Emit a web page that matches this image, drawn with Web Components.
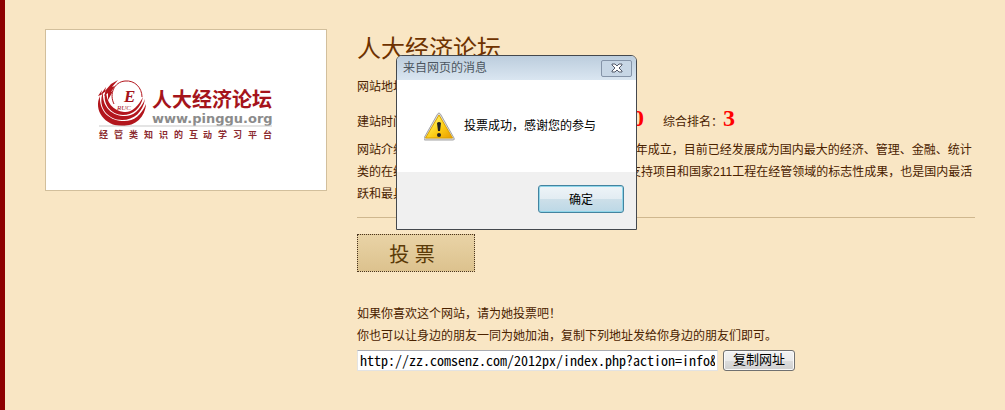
<!DOCTYPE html>
<html lang="zh-CN">
<head>
<meta charset="utf-8">
<title>人大经济论坛</title>
<style>
  body {
    margin: 0;
    background: #f9e6c4;
    color: #4a2200;
    font: 12px/22px "Liberation Sans", "Noto Sans CJK SC", sans-serif;
  }
</style>
</head>
<body>
<vote-page>
  <site-logo slot="logo"></site-logo>
  <site-info slot="main"></site-info>
  <vote-button slot="main">投 票</vote-button>
  <share-box slot="main" url="http://zz.comsenz.com/2012px/index.php?action=info&amp;"></share-box>
</vote-page>
<message-dialog heading="来自网页的消息">投票成功，感谢您的参与</message-dialog>

<script>
class VotePage extends HTMLElement {
  constructor() {
    super();
    this.attachShadow({ mode: 'open' });
    this.shadowRoot.innerHTML = `
      <style>
        :host {
          display: flex; align-items: flex-start; gap: 30px; box-sizing: border-box;
          min-height: 100vh; padding: 29px 30px 29px 40px; border-left: 5px solid #8e0000;
        }
        main { flex: 1; min-width: 0; }
      </style>
      <slot name="logo"></slot>
      <main><slot name="main"></slot></main>
    `;
  }
}
customElements.define('vote-page', VotePage);

class SiteLogo extends HTMLElement {
  constructor() {
    super();
    this.attachShadow({ mode: 'open' });
    this.shadowRoot.innerHTML = `
      <style>
        :host { display: block; background: #fff; border: 1px solid #d2bf9c; }
        svg { display: block; width: 280px; height: 160px; }
        .cn { font-family: "Noto Sans CJK SC", sans-serif; font-weight: 700; fill: #a5141b; }
        .name { font-size: 20px; }
        .tag { font-size: 9px; fill: #8c2b30; }
        .url { font: 700 13px "DejaVu Sans", sans-serif; fill: #8b8b8b; }
        .e { font: italic 700 17px "Liberation Serif", serif; fill: #a5141b; }
        .ruc { font: italic 7px "Liberation Serif", serif; fill: #a5141b; }
      </style>
      <svg viewBox="0 0 280 160" role="img" aria-label="人大经济论坛">
        <g fill="#b3161d">
          <path d="M54 66C47 80 59 96 76 96C90 96 99 87 100 74C95 86 87 92 76 91C62 90 53 80 54 66Z"/>
          <path d="M57 62C51 77 62 90 76 90C88 90 97 82 99 69C94 81 86 87 77 86C64 85 56 75 57 62Z"/>
          <path d="M60 60C55 73 65 85 77 85C87 85 95 78 97 67C92 77 85 83 78 82C67 81 60 72 60 60Z"/>
          <path d="M52 66L56 60L55 64L60 57L59 61L65 54L72 50L66 57L69 56L65 62L67 61L62 70L62 63L58 66L60 61L55 65Z"/>
        </g>
        <path d="M68 74C63 64 68 52 79 51C89 50 96 58 96 67" fill="none" stroke="#b3161d"/>
        <text class="e" x="78" y="72">E</text>
        <text class="ruc" x="71" y="80">RUC</text>
        <text class="cn name" x="106" y="77">人大经济论坛</text>
        <text class="url" x="106" y="93">www.pinggu.org</text>
        <path d="M53 96H226" stroke="#c9c9c9"/>
        <text class="cn tag" x="53 68 83 98 113 128 143 157 172 187 202 217" y="108">经管类知识的互动学习平台</text>
      </svg>
    `;
  }
}
customElements.define('site-logo', SiteLogo);

class SiteInfo extends HTMLElement {
  constructor() {
    super();
    this.attachShadow({ mode: 'open' });
    this.shadowRoot.innerHTML = `
      <style>
        :host { display: block; padding-bottom: 12px; border-bottom: 1px solid #cfb78e; }
        h1 { margin: 0; font-size: 24px; line-height: 40px; font-weight: 400; color: #6e3200; }
        p { margin: 0; }
        .address { padding-top: 7px; }
        .facts { display: flex; align-items: baseline; gap: 19px; padding: 8px 0 5px; line-height: 24px; }
        .period { display: flex; align-items: baseline; justify-content: space-between; width: 287px; }
        b { font: 700 24px/24px "Liberation Serif", serif; color: #f00; }
      </style>
      <h1>人大经济论坛</h1>
      <p class="address">网站地址：www.pinggu.org</p>
      <div class="facts">
        <div class="period"><span>建站时间：2003年</span><span>当前得票：<b>10</b></span></div>
        <span>综合排名：<b>3</b></span>
      </div>
      <p>网站介绍：人大经济论坛依托人大经济学院，于2003年成立，目前已经发展成为国内最大的经济、管理、金融、统计类的在线教育和培训平台网站，是国家985工程重点支持项目和国家211工程在经管领域的标志性成果，也是国内最活跃和最具影响力的经管教育网站。</p>
    `;
  }
}
customElements.define('site-info', SiteInfo);

class VoteButton extends HTMLElement {
  constructor() {
    super();
    this.attachShadow({ mode: 'open' });
    this.shadowRoot.innerHTML = `
      <style>
        :host { display: block; padding: 16px 0 31px; }
        button {
          display: block; width: 118px; height: 38px; padding: 0 8px 0 0;
          border: 1px dotted #4a3420; background: linear-gradient(#e9d3a6, #dcc28e);
          color: #5a3a08; font: 20px "Liberation Sans", "Noto Sans CJK SC", sans-serif; cursor: pointer;
        }
      </style>
      <button type="button"><slot></slot></button>
    `;
  }
}
customElements.define('vote-button', VoteButton);

class ShareBox extends HTMLElement {
  constructor() {
    super();
    this.attachShadow({ mode: 'open' });
    this.shadowRoot.innerHTML = `
      <style>
        :host { display: block; }
        p, label { display: block; margin: 0; }
        .row { display: flex; align-items: center; gap: 5px; padding-top: 3px; }
        input {
          box-sizing: border-box; width: 361px; height: 21px; padding: 0 2px 2px;
          border: 1px solid #e3e3e3; border-top-color: #abadb3; background: #fff; color: #000;
          font: 14px "Noto Sans Mono CJK SC", "Liberation Mono", monospace;
        }
        button {
          width: 72px; height: 21px; padding: 0 0 2px; border: 1px solid #707070; border-radius: 3px;
          background: linear-gradient(#f3f3f3, #ebebeb 50%, #dddddd 50%, #cfcfcf);
          box-shadow: inset 0 0 0 1px #fafafa; color: #000;
          font: 13px/17px "Liberation Sans", "Noto Sans CJK SC", sans-serif;
        }
      </style>
      <p>如果你喜欢这个网站，请为她投票吧！</p>
      <label for="url">你也可以让身边的朋友一同为她加油，复制下列地址发给你身边的朋友们即可。</label>
      <div class="row">
        <input id="url" type="text" readonly>
        <button type="button">复制网址</button>
      </div>
    `;
    this.input = this.shadowRoot.querySelector('input');
    this.shadowRoot.querySelector('button').addEventListener('click', () => {
      this.input.select();
      document.execCommand('copy');
    });
  }

  connectedCallback() { this.input.value = this.getAttribute('url') || ''; }
}
customElements.define('share-box', ShareBox);

class MessageDialog extends HTMLElement {
  constructor() {
    super();
    this.attachShadow({ mode: 'open' });
    this.shadowRoot.innerHTML = `
      <style>
        :host {
          position: absolute; left: 396px; top: 55px; width: 241px; box-sizing: border-box;
          border: 1px solid #44484d; border-radius: 6px 6px 0 0; overflow: hidden;
          background: #fff; color: #000;
        }
        :host([hidden]) { display: none; }
        header {
          display: flex; align-items: center; justify-content: space-between;
          height: 24px; padding: 0 4px 0 6px;
          background: linear-gradient(#bccddd, #dae6f1);
          color: #4c5660;
        }
        .close {
          display: flex; align-items: center; justify-content: center; width: 31px; height: 17px;
          padding: 0; border: 1px solid #8594a8; border-radius: 2px; background: #c7d6e5;
        }
        .body { display: flex; align-items: center; gap: 8px; height: 92px; padding: 0 27px; }
        .body svg { flex: none; }
        footer { display: flex; justify-content: flex-end; padding: 13px 12px 16px; background: #f0f0f0; }
        .ok {
          width: 86px; height: 28px; padding: 0 0 2px; border: 1px solid #44839f; border-radius: 3px;
          background: linear-gradient(#eef4f8, #e2ecf2 50%, #cddfe9 50%, #bcd8e6);
          box-shadow: inset 0 0 0 1px #8fd6ea; color: #000;
          font: 12px "Liberation Sans", "Noto Sans CJK SC", sans-serif;
        }
      </style>
      <header>
        <span class="heading"></span>
        <button class="close" type="button" aria-label="关闭">
          <svg width="12" height="10" viewBox="0 0 12 10">
            <path d="M1 1H4L6 3L8 1H11V2L8 5L11 8V9H8L6 7L4 9H1V8L4 5L1 2Z" fill="#fff" stroke="#535a6b"/>
          </svg>
        </button>
      </header>
      <div class="body">
        <svg width="32" height="32" viewBox="0 0 32 32" aria-hidden="true">
          <defs>
            <linearGradient id="sign" x2="1" y2="1">
              <stop offset="0.3" stop-color="#ffe94a"/>
              <stop offset="0.6" stop-color="#fccb14"/>
              <stop offset="1" stop-color="#e89a00"/>
            </linearGradient>
          </defs>
          <path d="M15 3Q16 3 17 5L30 28Q31 30 29 30H1Q-1 30 0 28L13 5Q14 3 15 3Z" fill="#dcdcdc" stroke="#a4a4a4"/>
          <path d="M15 5L28.500 28H1.500Z" fill="url(#sign)" stroke="#dca100" stroke-linejoin="round"/>
          <path d="M13 13Q15 11 17 13L16 21H14Z" fill="#222"/>
          <circle cx="15" cy="25" r="2" fill="#222"/>
        </svg>
        <slot></slot>
      </div>
      <footer><button class="ok" type="button">确定</button></footer>
    `;
    this.shadowRoot.querySelectorAll('button').forEach((button) => {
      button.addEventListener('click', () => { this.hidden = true; });
    });
  }

  connectedCallback() {
    this.setAttribute('role', 'dialog');
    this.shadowRoot.querySelector('.heading').textContent = this.getAttribute('heading');
  }
}
customElements.define('message-dialog', MessageDialog);
</script>
</body>
</html>
